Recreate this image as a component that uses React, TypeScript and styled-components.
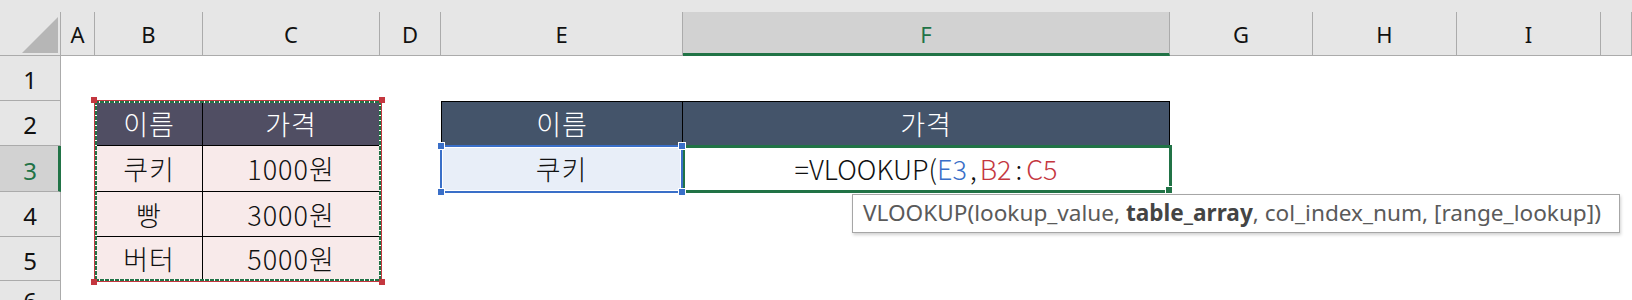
import React from 'react';
import styled, { createGlobalStyle, css } from 'styled-components';

const GlobalStyle = createGlobalStyle`
  html, body {
    margin: 0;
    padding: 0;
    background: #ffffff;
  }
  body {
    font-family: "Noto Sans CJK KR", "Noto Sans", sans-serif;
  }
`;

const GREEN = '#217346';
const LINE = '#ababab';

const COLS = [61, 34, 108, 177, 61, 242, 487, 143, 144, 144];
const ROWS = [45, 45, 46, 45, 44];
const LETTERS = ['A', 'B', 'C', 'D', 'E', 'F', 'G', 'H', 'I', ''];

const Sheet = styled.div`
  position: relative;
  display: grid;
  grid-template-columns: ${COLS.map((c) => `${c}px`).join(' ')} 1fr;
  grid-template-rows: 12px 44px ${ROWS.map((r) => `${r}px`).join(' ')} 1fr;
  width: 1632px;
  height: 300px;
  overflow: hidden;
  background: #fff;
`;

const TopBand = styled.div`
  grid-column: 1 / -1;
  grid-row: 1;
  background: #e6e6e6;
`;

const Corner = styled.div`
  grid-column: 1;
  grid-row: 2;
  display: flex;
  align-items: flex-end;
  justify-content: flex-end;
  padding: 0 2px 2px 0;
  box-sizing: border-box;
  background: #e6e6e6;
  border-right: 1px solid ${LINE};
  border-bottom: 1px solid ${LINE};
`;

const ColHeader = styled.div<{ $col: number; $active?: boolean }>`
  grid-column: ${(p) => p.$col};
  grid-row: 2;
  display: flex;
  align-items: center;
  justify-content: center;
  box-sizing: border-box;
  font-family: "Noto Sans", "Open Sans", sans-serif;
  font-size: 22px;
  color: #111;
  background: #e6e6e6;
  border-right: 1px solid ${LINE};
  border-bottom: 1px solid ${LINE};
  ${(p) =>
    p.$active &&
    css`
      background: #d2d2d2;
      color: ${GREEN};
      border-bottom: 3px solid ${GREEN};
      padding-top: 2px;
    `}
`;

const RowHeader = styled.div<{ $row: number; $active?: boolean }>`
  grid-column: 1;
  grid-row: ${(p) => p.$row};
  display: flex;
  align-items: center;
  justify-content: center;
  box-sizing: border-box;
  font-family: "Noto Sans", "Open Sans", sans-serif;
  font-size: 24px;
  padding-top: 3px;
  color: #111;
  background: #e6e6e6;
  border-right: 1px solid ${LINE};
  border-bottom: 1px solid ${LINE};
  ${(p) =>
    p.$active &&
    css`
      background: #d2d2d2;
      color: ${GREEN};
      border-right: 3px solid ${GREEN};
      padding-left: 2px;
    `}
`;

type Tone = 'plum' | 'pink' | 'slate' | 'ice' | 'plain';

const tones: Record<Tone, { bg: string; fg: string }> = {
  plum: { bg: '#504e63', fg: '#ffffff' },
  pink: { bg: '#f8eaea', fg: '#111111' },
  slate: { bg: '#44546a', fg: '#ffffff' },
  ice: { bg: '#e8eef8', fg: '#111111' },
  plain: { bg: '#ffffff', fg: '#111111' },
};

const Cell = styled.div<{ $col: number; $row: number; $tone: Tone; $top?: boolean; $left?: boolean }>`
  grid-column: ${(p) => p.$col};
  grid-row: ${(p) => p.$row};
  display: flex;
  align-items: center;
  justify-content: center;
  box-sizing: border-box;
  font-size: 27px;
  font-weight: 300;
  letter-spacing: 1px;
  background: ${(p) => tones[p.$tone].bg};
  color: ${(p) => tones[p.$tone].fg};
  border-right: 1px solid #000;
  border-bottom: 1px solid #000;
  ${(p) => p.$top && 'border-top: 1px solid #000;'}
  ${(p) => p.$left && 'border-left: 1px solid #000;'}
`;

const Formula = styled.span`
  letter-spacing: 0;
`;

const Ref = styled.span<{ $color?: string }>`
  color: ${(p) => p.$color || '#111'};
`;

const Punct = styled.span<{ $gap: number }>`
  margin: 0 ${(p) => p.$gap}px;
`;

const dash = (dir: string) =>
  `repeating-linear-gradient(${dir}, ${GREEN} 0 4px, #ffffff 4px 5px)`;

const CopyRange = styled.div`
  grid-column: 3 / 5;
  grid-row: 4 / 8;
  position: relative;
  z-index: 2;
  margin: -1px -2px -1px -1px;
  border: 1px solid #c4373f;
  pointer-events: none;
  background:
    ${dash('90deg')} top left / 100% 2px no-repeat,
    ${dash('90deg')} bottom left / 100% 2px no-repeat,
    ${dash('180deg')} top left / 2px 100% no-repeat,
    ${dash('180deg')} top right / 2px 100% no-repeat;
`;

const ActiveCell = styled.div`
  grid-column: 7;
  grid-row: 5;
  position: relative;
  z-index: 3;
  margin: -1px -2px -1px -1px;
  border: 3px solid ${GREEN};
  pointer-events: none;
`;

const RefRange = styled.div`
  grid-column: 6;
  grid-row: 5;
  position: relative;
  z-index: 4;
  margin: -1px 0 -1px -1px;
  border: 2px solid #3a6fc8;
  box-shadow: inset 0 0 0 1px #ffffff;
  pointer-events: none;
`;

type Corner4 = 'tl' | 'tr' | 'bl' | 'br';

const Handle = styled.span<{ $at: Corner4; $color: string; $outline?: boolean }>`
  position: absolute;
  width: 6px;
  height: 6px;
  box-sizing: border-box;
  background: ${(p) => p.$color};
  ${(p) => p.$outline && 'outline: 1px solid #ffffff;'}
  ${(p) => (p.$at[0] === 't' ? 'top: -4px;' : 'bottom: -4px;')}
  ${(p) => (p.$at[1] === 'l' ? 'left: -4px;' : 'right: -4px;')}
`;

const FillHandle = styled.span`
  position: absolute;
  right: -3px;
  bottom: -3px;
  width: 7px;
  height: 7px;
  box-sizing: border-box;
  background: ${GREEN};
  border-left: 1px solid #fff;
  border-top: 1px solid #fff;
`;

const Tooltip = styled.div`
  position: absolute;
  left: 852px;
  top: 194px;
  z-index: 5;
  width: 768px;
  height: 39px;
  box-sizing: border-box;
  display: flex;
  align-items: center;
  padding: 0 0 2px 10px;
  background: #ffffff;
  border: 1px solid #a6a6a6;
  box-shadow: 1px 2px 3px rgba(0, 0, 0, 0.18);
  font-family: "Noto Sans", "Open Sans", sans-serif;
  font-size: 22.6px;
  color: #5a5a5a;
  white-space: nowrap;
`;

const Strong = styled.b`
  font-weight: 700;
  color: #444;
`;

const table1 = [
  ['이름', '가격'],
  ['쿠키', '1000원'],
  ['빵', '3000원'],
  ['버터', '5000원'],
];

export default function App() {
  return (
    <>
      <GlobalStyle />
      <Sheet>
        <TopBand />
        <Corner>
          <svg width="36" height="36" viewBox="0 0 36 36">
            <polygon points="36,0 36,36 0,36" fill="#b6b6b6" />
          </svg>
        </Corner>
        {LETTERS.map((l, i) => (
          <ColHeader key={i} $col={i + 2} $active={l === 'F'}>
            {l}
          </ColHeader>
        ))}
        {[1, 2, 3, 4, 5, 6].map((n) => (
          <RowHeader key={n} $row={n + 2} $active={n === 3}>
            {n}
          </RowHeader>
        ))}

        {table1.map((row, r) =>
          row.map((text, c) => (
            <Cell
              key={`${r}-${c}`}
              $col={3 + c}
              $row={4 + r}
              $tone={r === 0 ? 'plum' : 'pink'}
              $top={r === 0}
              $left={c === 0}
            >
              {text}
            </Cell>
          ))
        )}
        <CopyRange>
          <Handle $at="tl" $color="#c4373f" />
          <Handle $at="tr" $color="#c4373f" />
          <Handle $at="bl" $color="#c4373f" />
          <Handle $at="br" $color="#c4373f" />
        </CopyRange>

        <Cell $col={6} $row={4} $tone="slate" $top $left>
          이름
        </Cell>
        <Cell $col={7} $row={4} $tone="slate" $top>
          가격
        </Cell>
        <Cell $col={6} $row={5} $tone="ice">
          쿠키
        </Cell>
        <Cell $col={7} $row={5} $tone="plain">
          <Formula>
            <Ref>=VLOOKUP(</Ref>
            <Ref $color="#3a6fc8">E3</Ref>
            <Punct $gap={3}>,</Punct>
            <Ref $color="#c4373f">B2</Ref>
            <Punct $gap={4}>:</Punct>
            <Ref $color="#c4373f">C5</Ref>
          </Formula>
        </Cell>
        <ActiveCell>
          <FillHandle />
        </ActiveCell>
        <RefRange>
          <Handle $at="tl" $color="#3a6fc8" $outline />
          <Handle $at="tr" $color="#3a6fc8" $outline />
          <Handle $at="bl" $color="#3a6fc8" $outline />
          <Handle $at="br" $color="#3a6fc8" $outline />
        </RefRange>

        <Tooltip>
          VLOOKUP(lookup_value,&nbsp;<Strong>table_array</Strong>, col_index_num, [range_lookup])
        </Tooltip>
      </Sheet>
    </>
  );
}
